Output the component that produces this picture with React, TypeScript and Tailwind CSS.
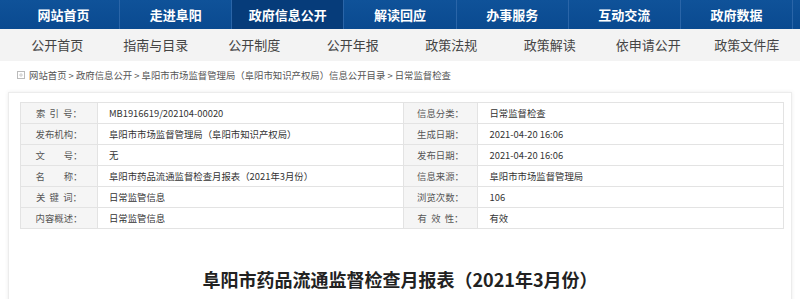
import React from "react";

const mainNav = ["网站首页", "走进阜阳", "政府信息公开", "解读回应", "办事服务", "互动交流", "政府数据"];
const subNav = ["公开首页", "指南与目录", "公开制度", "公开年报", "政策法规", "政策解读", "依申请公开", "政策文件库"];

const rows: [string, string, string, string][] = [
  ["索  引  号：", "MB1916619/202104-00020", "信息分类：", "日常监督检查"],
  ["发布机构：", "阜阳市市场监督管理局（阜阳市知识产权局）", "生成日期：", "2021-04-20 16:06"],
  ["文　　号：", "无", "发布日期：", "2021-04-20 16:06"],
  ["名　　称：", "阜阳市药品流通监督检查月报表（2021年3月份）", "信息来源：", "阜阳市市场监督管理局"],
  ["关  键  词：", "日常监管信息", "浏览次数：", "106"],
  ["内容概述：", "日常监管信息", "有  效  性：", "有效"],
];

export default function App() {
  return (
    <div className="w-[800px] h-[299px] overflow-hidden bg-white font-['Noto_Sans_CJK_SC',sans-serif]">
      {/* main nav */}
      <div className="h-[29px] bg-gradient-to-b from-[#0f5299] to-[#0a4a90]">
        <div className="ml-[8px] w-[785px] h-full flex">
          {mainNav.map((n, i) => (
            <div
              key={n}
              className={`flex-1 flex items-center justify-center text-[13px] font-bold text-white border-r border-[#2a65a8] ${
                i === 2 ? "bg-[#063c7a]" : ""
              }`}
            >
              {n}
            </div>
          ))}
        </div>
      </div>

      {/* sub nav */}
      <div className="h-[32px] bg-[#f3f3f3]">
        <div className="ml-[8px] w-[788px] h-full flex">
          {subNav.map((n) => (
            <div key={n} className="flex-1 flex items-center justify-center text-[13px] text-[#444]">
              {n}
            </div>
          ))}
        </div>
      </div>

      {/* breadcrumb */}
      <div className="h-[28px] flex items-center pl-[17px] text-[9.4px] text-[#555]">
        <svg width="8" height="8" viewBox="0 0 8 8" className="mr-[4px]">
          <rect x="0.5" y="0.5" width="7" height="7" fill="none" stroke="#bbb" />
          <path d="M2 4h4M4 2v4" stroke="#ccc" />
        </svg>
        <span>网站首页 &gt; 政府信息公开 &gt; 阜阳市市场监督管理局（阜阳市知识产权局）信息公开目录 &gt; 日常监督检查</span>
      </div>

      {/* card */}
      <div className="mt-[3px] ml-[8px] w-[784px] bg-white border border-[#ececec] shadow-[0_0_4px_rgba(0,0,0,0.08)] pt-[9px] px-[11px] h-[300px]">
        <table className="w-[764px] border-collapse text-[9.4px] text-[#333]">
          <tbody>
            {rows.map((r) => (
              <tr key={r[0]} className="h-[21px]">
                <td className="w-[77px] bg-[#f5f5f5] border border-[#e3e3e3] text-center text-[#555] whitespace-pre">{r[0]}</td>
                <td className="w-[306px] border border-[#e3e3e3] pl-[11px]">{r[1]}</td>
                <td className="w-[75px] bg-[#f5f5f5] border border-[#e3e3e3] text-center text-[#555] whitespace-pre">{r[2]}</td>
                <td className="w-[306px] border border-[#e3e3e3] pl-[11px]">{r[3]}</td>
              </tr>
            ))}
          </tbody>
        </table>

        <h1 className="mt-[37px] text-center text-[18px] font-bold text-[#222]">
          阜阳市药品流通监督检查月报表（2021年3月份）
        </h1>
      </div>
    </div>
  );
}
